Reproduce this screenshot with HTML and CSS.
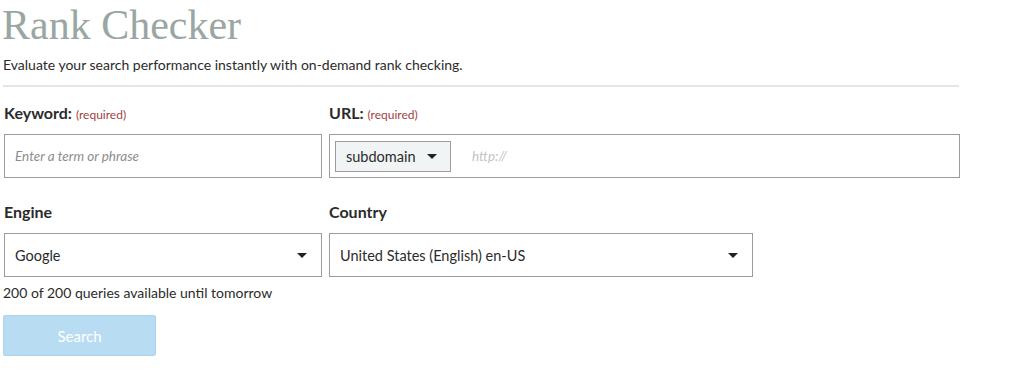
FILE: index.html
```html
<!DOCTYPE html>
<html lang="en">
<head>
  <meta charset="UTF-8" />
  <title>Rank Checker</title>
  <link rel="stylesheet" href="styles.css">
</head>
<body>
  <h1>Rank Checker</h1>
  <p class="intro">Evaluate your search performance instantly with on-demand rank checking.</p>
  <hr class="divider" />

  <div class="row">
    <div class="field keyword">
      <label>Keyword: <span class="req">(required)</span></label>
      <div class="box"><span class="ph">Enter a term or phrase</span></div>
    </div>
    <div class="field url">
      <label>URL: <span class="req">(required)</span></label>
      <div class="box url-box">
        <div class="sub">subdomain <span class="caret"></span></div>
        <span class="ph">http://</span>
      </div>
    </div>
  </div>

  <div class="row row2">
    <div class="field keyword">
      <label>Engine</label>
      <div class="box select">Google <span class="caret"></span></div>
    </div>
    <div class="field country">
      <label>Country</label>
      <div class="box select">United States (English) en-US <span class="caret"></span></div>
    </div>
  </div>

  <p class="quota">200 of 200 queries available until tomorrow</p>
  <button class="search">Search</button>
</body>
</html>
```

FILE: styles.css
```css
body {
  margin: 0;
  padding: 0 0 0 4px;
  font-family: Lato, "Open Sans", sans-serif;
  color: #2b2b2b;
  background: #fff;
}

h1 {
  font-family: "Liberation Serif", serif;
  font-weight: normal;
  font-size: 42px;
  color: #9aa6a2;
  margin: 2px 0 0 -2px;
  line-height: 46px;
}

.intro {
  font-size: 14px;
  margin: 8px 0 0 -1px;
}

.divider {
  width: 956px;
  margin: 12px 0 0 -1px;
  border: none;
  border-top: 2px solid #e1e7e5;
}

.row {
  display: flex;
  gap: 7px;
  margin-top: 16px;
}

.row2 {
  margin-top: 24px;
}

.field label {
  display: block;
  font-weight: bold;
  font-size: 16px;
  height: 20px;
  margin-bottom: 11px;
}

.req {
  font-weight: normal;
  font-size: 12px;
  color: #a0433f;
}

.keyword { width: 318px; }
.url { width: 631px; }
.country { width: 424px; }

.box {
  box-sizing: border-box;
  height: 44px;
  border: 1px solid #9c9c9c;
  display: flex;
  align-items: center;
  padding: 0 10px;
  font-size: 14.5px;
}

.ph {
  color: #8d8d8d;
  font-style: italic;
  font-size: 13.5px;
}

.url-box {
  padding-left: 5px;
}

.url-box .ph {
  color: #c3c3c3;
  margin-left: 21px;
}

.sub {
  box-sizing: border-box;
  width: 116px;
  height: 31px;
  background: #f0f4f4;
  border: 1px solid #9c9c9c;
  display: flex;
  align-items: center;
  padding-left: 10px;
  font-size: 14.5px;
}

.sub .caret {
  margin-left: 11px;
}

.caret {
  width: 0;
  height: 0;
  border-left: 5px solid transparent;
  border-right: 5px solid transparent;
  border-top: 5px solid #222;
}

.select {
  justify-content: space-between;
  padding-right: 14px;
}

.quota {
  font-size: 14px;
  margin: 7px 0 0 -1px;
}

.search {
  margin: 14px 0 0 -1px;
  width: 153px;
  height: 41px;
  background: #b8ddf2;
  border: 1px solid #aed3ea;
  border-radius: 2px;
  color: #fff;
  font-family: Lato, sans-serif;
  font-size: 15px;
}
```
